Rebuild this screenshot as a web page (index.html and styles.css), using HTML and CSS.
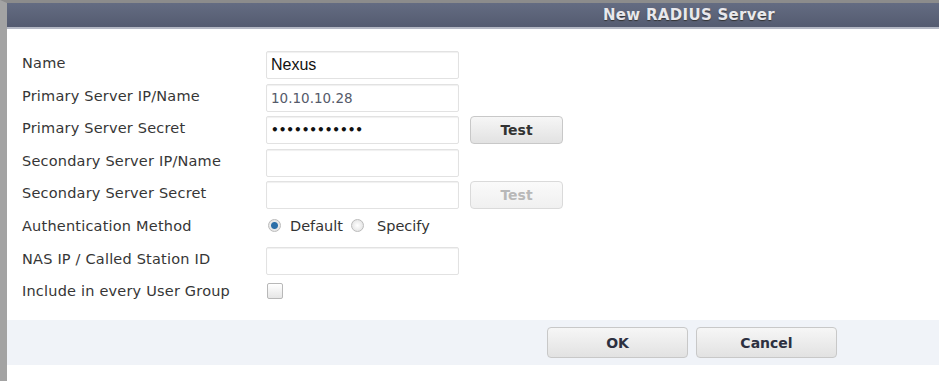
FILE: index.html
```html
<!DOCTYPE html>
<html lang="en">
<head>
    <meta charset="UTF-8">
    <title>New RADIUS Server</title>
    <link rel="stylesheet" href="styles.css">
</head>
<body>
    <div class="window">
        <div class="titlebar">
            <span class="title">New RADIUS Server</span>
        </div>
        <div class="form">
            <div class="row">
                <label>Name</label>
                <div class="field name-value">Nexus</div>
            </div>
            <div class="row">
                <label>Primary Server IP/Name</label>
                <div class="field ip-value">10.10.10.28</div>
            </div>
            <div class="row">
                <label>Primary Server Secret</label>
                <div class="field secret-value">&#8226;&#8226;&#8226;&#8226;&#8226;&#8226;&#8226;&#8226;&#8226;&#8226;&#8226;&#8226;</div>
                <button class="btn test">Test</button>
            </div>
            <div class="row">
                <label>Secondary Server IP/Name</label>
                <div class="field"></div>
            </div>
            <div class="row">
                <label>Secondary Server Secret</label>
                <div class="field"></div>
                <button class="btn test disabled">Test</button>
            </div>
            <div class="row">
                <label>Authentication Method</label>
                <div class="radios">
                    <span class="radio checked"></span><span class="radio-label">Default</span>
                    <span class="radio"></span><span class="radio-label">Specify</span>
                </div>
            </div>
            <div class="row">
                <label>NAS IP / Called Station ID</label>
                <div class="field"></div>
            </div>
            <div class="row">
                <label>Include in every User Group</label>
                <span class="checkbox"></span>
            </div>
        </div>
        <div class="footer">
            <button class="btn action">OK</button>
            <button class="btn action">Cancel</button>
        </div>
    </div>
</body>
</html>
```

FILE: styles.css
```css
body {
    margin: 0;
    padding: 0;
    background-color: #fff;
    font-family: "DejaVu Sans", Verdana, sans-serif;
    overflow: hidden;
}
.window {
    height: 381px;
    border-left: 7px solid #a3a3a3;
    border-top: 3px solid #8c8c8c;
    box-sizing: border-box;
    background-color: #fff;
}
.titlebar {
    height: 24px;
    background: linear-gradient(#646c82, #545b70);
    border-bottom: 2px solid #b4b8c4;
    display: flex;
    align-items: center;
    padding-left: 596px;
}
.title {
    color: #e8e8ec;
    font-weight: bold;
    font-size: 15px;
    letter-spacing: 0.3px;
    text-shadow: 0 1px 1px #333;
}
.form {
    padding: 22px 0 0 15px;
    height: 269px;
}
.row {
    display: flex;
    align-items: center;
    height: 28px;
    margin-bottom: 4.6px;
}
.row label {
    width: 244px;
    font-size: 14.5px;
    letter-spacing: 0.2px;
    color: #363636;
    margin-top: -4px;
}
.field {
    width: 187px;
    height: 26px;
    border: 1px solid #e2e2e2;
    border-radius: 2px;
    box-sizing: content-box;
    display: flex;
    align-items: center;
    padding-left: 4px;
    box-shadow: inset 0 1px 1px #f0f0f0;
}
.name-value {
    font-family: "Liberation Sans", Arial, sans-serif;
    font-size: 16px;
    color: #111;
}
.ip-value {
    font-size: 13.5px;
    color: #555a6a;
}
.secret-value {
    font-size: 12px;
    color: #111;
    font-weight: bold;
}
.btn {
    font-family: "DejaVu Sans", Verdana, sans-serif;
    font-weight: bold;
    font-size: 14px;
    color: #333;
    background: linear-gradient(#f6f6f6, #e2e2e2);
    border: 1px solid #c8c8c8;
    border-radius: 4px;
    cursor: pointer;
}
.test {
    width: 93px;
    height: 28px;
    margin-left: 11px;
}
.test.disabled {
    color: #b8b8b8;
    background: linear-gradient(#fafafa, #f0f0f0);
    border-color: #dadada;
}
.radios {
    display: flex;
    align-items: center;
    font-size: 14.5px;
    color: #333;
    margin-top: -4px;
}
.radio {
    width: 11px;
    height: 11px;
    border-radius: 50%;
    border: 1px solid #bbb;
    background: radial-gradient(#fff, #ddd);
    margin-left: 2px;
    margin-right: 9px;
    box-sizing: content-box;
}
.radio.checked {
    background: radial-gradient(circle, #2c6fa8 0, #2c6fa8 3px, #e8e8e8 4px);
}
.radio-label {
    margin-right: 6px;
}
.radio-label + .radio {
    margin-right: 13px;
}
.checkbox {
    width: 14px;
    height: 14px;
    border: 1px solid #b8b8b8;
    border-radius: 2px;
    background: linear-gradient(#fff, #e6e6e6);
    margin-top: -4px;
    margin-left: 1px;
}
.footer {
    height: 45px;
    background-color: #f0f3f8;
    display: flex;
    align-items: center;
    gap: 8px;
    padding-left: 540px;
}
.action {
    width: 141px;
    height: 31px;
    color: #2c3040;
}
```
